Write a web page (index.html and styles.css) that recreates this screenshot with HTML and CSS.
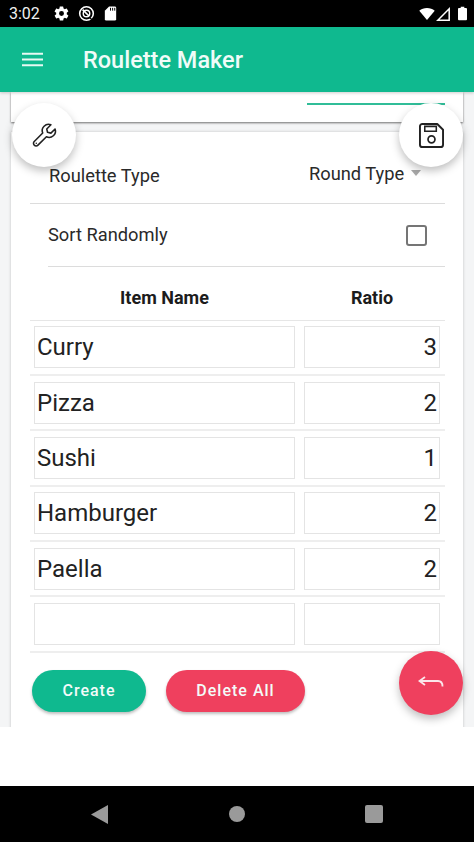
FILE: index.html
```
<!DOCTYPE html>
<html lang="en">
<head>
<meta charset="utf-8">
<title>Roulette Maker</title>
<link rel="stylesheet" href="styles.css">
</head>
<body>
<div class="phone">
  <div class="status">
    <span class="time">3:02</span>
    <svg class="st-icon gear" viewBox="0 0 24 24"><path fill="#fff" d="M19.4 13c.04-.32.1-.66.1-1s-.06-.68-.1-1l2.1-1.65c.2-.15.25-.42.12-.64l-2-3.46c-.12-.22-.39-.3-.61-.22l-2.49 1c-.52-.4-1.08-.73-1.69-.98l-.38-2.65A.49.49 0 0 0 14 2h-4c-.25 0-.46.18-.49.42l-.38 2.65c-.61.25-1.17.59-1.69.98l-2.49-1c-.23-.09-.49 0-.61.22l-2 3.46c-.13.22-.07.49.12.64L4.57 11c-.04.32-.07.66-.07 1s.03.68.07 1l-2.11 1.65c-.19.15-.25.42-.12.64l2 3.46c.12.22.39.3.61.22l2.49-1c.52.4 1.08.73 1.69.98l.38 2.65c.03.24.24.42.49.42h4c.25 0 .46-.18.49-.42l.38-2.65c.61-.25 1.17-.59 1.69-.98l2.49 1c.23.09.49 0 .61-.22l2-3.46c.12-.22.07-.49-.12-.64L19.4 13zM12 15.5a3.5 3.5 0 1 1 0-7 3.5 3.5 0 0 1 0 7z"/></svg>
    <svg class="st-icon ring" viewBox="0 0 24 24"><circle cx="12" cy="12" r="9.6" fill="none" stroke="#fff" stroke-width="2.2"/><circle cx="12" cy="12" r="4.6" fill="none" stroke="#fff" stroke-width="2"/><path d="M6.5 6.5l9 9" stroke="#fff" stroke-width="2.4"/><path d="M16 18l4 2.5" stroke="#000" stroke-width="1.6"/></svg>
    <svg class="st-icon sd" viewBox="0 0 24 24"><path fill="#fff" d="M18 2h-8L4 8v12a2 2 0 0 0 2 2h12a2 2 0 0 0 2-2V4a2 2 0 0 0-2-2z"/><path stroke="#000" stroke-width="1.4" d="M12 4v4M15 4v4M18 4v4"/></svg>
    <span class="spacer"></span>
    <svg class="wifi" viewBox="0 0 18 14"><path fill="#fff" d="M9 14L0 3.2C2.4 1.2 5.5 0 9 0s6.6 1.2 9 3.2z"/></svg>
    <svg class="signal" viewBox="0 0 14 14"><path fill="none" stroke="#fff" stroke-width="1.5" d="M1.8 13.2L13.2 1.8v11.4z"/></svg>
    <svg class="battery" viewBox="0 0 10 15"><path fill="#fff" d="M3 0h4v1.4h2c.6 0 1 .4 1 1V14c0 .6-.4 1-1 1H1c-.6 0-1-.4-1-1V2.400c0-.6.4-1 1-1h2z"/></svg>
  </div>

  <header class="appbar">
    <svg class="menu" viewBox="0 0 22 15"><path stroke="#e6f9f3" stroke-width="2.100" d="M0 1.500h22M0 7.500h22M0 13.500h22"/></svg>
    <h1 class="title">Roulette Maker</h1>
  </header>

  <main class="content">
    <section class="top-card"><div class="tab-line"></div></section>
    <section class="card">
      <div class="row row-type">
        <span class="label">Roulette Type</span>
        <span class="select">Round Type<i class="caret"></i></span>
      </div>
      <div class="row row-sort">
        <span class="label">Sort Randomly</span>
        <span class="checkbox"></span>
      </div>
      <div class="thead"><span class="th-name">Item Name</span><span class="th-ratio">Ratio</span></div>
      <div class="trow"><input class="in-name" value="Curry"><input class="in-ratio" value="3"></div>
      <div class="trow"><input class="in-name" value="Pizza"><input class="in-ratio" value="2"></div>
      <div class="trow"><input class="in-name" value="Sushi"><input class="in-ratio" value="1"></div>
      <div class="trow"><input class="in-name" value="Hamburger"><input class="in-ratio" value="2"></div>
      <div class="trow"><input class="in-name" value="Paella"><input class="in-ratio" value="2"></div>
      <div class="trow"><input class="in-name" value=""><input class="in-ratio" value=""></div>
      <div class="actions">
        <button class="btn btn-green">Create</button>
        <button class="btn btn-red">Delete All</button>
      </div>
    </section>
    <button class="fab fab-tool" aria-label="Settings">
      <svg viewBox="0 0 24 24" width="27" height="27"><path fill="none" stroke="#222" stroke-width="1.400" stroke-linejoin="round" d="M21.400 6.200l-3.700 3.700-3-.700-.700-3 3.700-3.700a5.600 5.600 0 0 0-7.300 7.300L2.900 17.300a2.300 2.300 0 0 0 3.300 3.300l7.500-7.500a5.600 5.600 0 0 0 7.700-6.900z"/><circle cx="4.700" cy="18.900" r=".7" fill="#222"/></svg>
    </button>
    <button class="fab fab-save" aria-label="Save">
      <svg viewBox="0 0 26 26" width="25" height="25"><path fill="none" stroke="#222" stroke-width="2" stroke-linejoin="round" d="M3.500 1h15.500L25 7v15.500a2.500 2.500 0 0 1-2.500 2.500h-19A2.500 2.500 0 0 1 1 22.500v-19A2.500 2.500 0 0 1 3.500 1z"/><path fill="none" stroke="#222" stroke-width="1.600" d="M6 3.500h12v5H6z"/><circle cx="13" cy="17" r="3.600" fill="none" stroke="#222" stroke-width="1.800"/></svg>
    </button>
    <button class="fab fab-back" aria-label="Back">
      <svg viewBox="0 0 26 14" width="26" height="14"><path fill="none" stroke="#fbe6ea" stroke-width="1.800" d="M7 1L1.500 5 7 9M1.500 5H20c2.800 0 4.500 2 4.500 5.500"/></svg>
    </button>
  </main>

  <div class="gap"></div>

  <nav class="navbar">
    <span class="nav-slot"><svg viewBox="0 0 17 19" width="17" height="19"><path fill="#9a9a9a" d="M17 0v19L0 9.500z"/></svg></span>
    <span class="nav-slot"><span class="nav-home"></span></span>
    <span class="nav-slot"><span class="nav-recent"></span></span>
  </nav>
</div>
</body>
</html>
```
FILE: styles.css
```
* { box-sizing: border-box; }
html, body { margin: 0; padding: 0; background: #fff; }
body { font-family: Roboto, "Liberation Sans", sans-serif; color: #222; }
.phone { width: 474px; height: 842px; display: flex; flex-direction: column; overflow: hidden; }

.status { height: 27px; background: #000; display: flex; align-items: center; padding: 0 7px 0 9px; flex: none; }
.time { color: #f0f0f0; font-size: 16px; width: 44px; }
.st-icon { width: 17px; height: 17px; margin-right: 8px; }
.gear { margin-left: 0; }
.sd { margin-left: -1px; }
.spacer { flex: 1; }
.wifi { width: 16px; height: 12px; margin-right: 1px; }
.signal { width: 14px; height: 14px; margin-right: 8px; }
.battery { width: 9px; height: 15px; }

.appbar { height: 65px; background: #0fb98f; display: flex; align-items: center; padding-left: 22px; flex: none; position: relative; z-index: 2; box-shadow: 0 1px 3px rgba(0,0,0,.2); }
.menu { width: 21px; height: 15px; margin-right: 40px; }
.title { margin: 0; font-size: 23.500px; font-weight: 500; color: #f0fcf8; }

.content { flex: none; height: 635px; background: #f4f5f6; padding: 0 11px; position: relative; overflow: hidden; }
.top-card { height: 30px; background: #fff; box-shadow: 0 1px 2px rgba(0,0,0,.55); padding: 11px 18px 0 296px; }
.tab-line { height: 2px; background: #30bd98; }
.card { margin-top: 10px; height: 600px; background: #fff; box-shadow: 0 0 3px rgba(0,0,0,.2); padding: 0 18px 0 19px; }

.row { display: flex; justify-content: space-between; align-items: center; font-size: 18.300px; color: #2a2a2a; border-bottom: 1px solid #dcdcdc; }
.row-type { height: 72px; padding: 15px 0 0 19px; }
.row-sort { height: 63px; margin-left: 18px; padding: 0 18px 0 0; }
.row-sort .label { margin-top: -2px; }
.select { display: flex; align-items: center; width: 138px; padding-left: 2px; margin-top: -4px; }
.caret { margin-left: 7px; border: 5.500px solid transparent; border-top: 6px solid #a8a8a8; border-bottom: 0; }
.checkbox { width: 21px; height: 21px; border: 2px solid #757575; border-radius: 3px; }

.thead { height: 53.500px; display: flex; align-items: center; font-size: 18px; font-weight: 700; color: #1c1c1c; border-bottom: 1px solid #e6e6e6; padding-top: 8px; }
.th-name { width: 269px; text-align: center; }
.th-ratio { width: 146px; text-align: center; }

.trow { height: 55.400px; display: flex; align-items: center; gap: 9px; padding: 0 5px 0 4px; border-bottom: 2px solid #eeeeee; }
.trow input { height: 42px; border: 1.500px solid #e4e4e4; background: #fff; font: 400 24px Roboto, sans-serif; color: #222; padding: 0 2px; outline: none; border-radius: 0; }
.in-name { width: 261px; }
.in-ratio { width: 136px; text-align: right; }

.actions { display: flex; gap: 20px; padding: 17px 0 0 2px; }
.btn { height: 42px; border: 0; border-radius: 21px; color: #f3fbf9; font: 500 16px Roboto, sans-serif; letter-spacing: 1px; box-shadow: 0 2px 3px rgba(0,0,0,.25); padding: 0; }
.btn-green { width: 114px; background: #0fb98f; }
.btn-red { width: 139px; background: #ef405e; }

.fab { position: absolute; width: 64px; height: 64px; border-radius: 50%; border: 0; padding: 0; display: flex; align-items: center; justify-content: center; background: #fff; box-shadow: 0 4px 9px rgba(0,0,0,.25); }
.fab-tool { left: 12px; top: 11px; }
.fab-save { left: 399px; top: 11px; }
.fab-back { left: 399px; top: 559px; background: #ef405e; }

.gap { flex: none; height: 59px; background: #fff; }
.navbar { height: 56px; background: #000; display: flex; flex: none; padding: 0 31px; }
.nav-slot { flex: 1; display: flex; align-items: center; justify-content: center; }
.nav-home { width: 16px; height: 16px; border-radius: 50%; background: #9a9a9a; }
.nav-recent { width: 18px; height: 18px; border-radius: 2px; background: #9a9a9a; }
```
